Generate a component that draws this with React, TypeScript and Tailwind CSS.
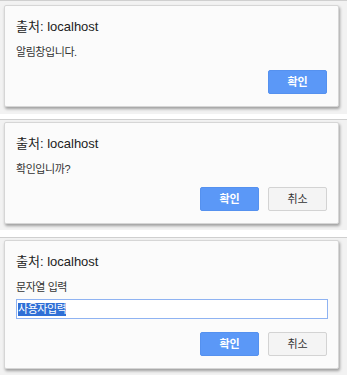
const font = { fontFamily: '"Liberation Sans", "Noto Sans CJK KR", sans-serif' };

function Dialog({ message, prompt, cancel }: { message: string; prompt?: string; cancel?: boolean }) {
  return (
    <div className="bg-[#fbfbfb] border border-[#d6d6d6] rounded-[2px] shadow-[1px_2px_3px_rgba(0,0,0,0.35)] pl-[11px] pr-[11px] pt-[13px] pb-[12px]">
      <div className="text-[13px] leading-[16px] text-[#222]">출처: localhost</div>
      <div className="mt-[10px] text-[11px] leading-[14px] text-[#333] tracking-[-0.04em]">{message}</div>
      {prompt !== undefined && (
        <div className="mt-[5px] h-[20px] mr-[-1px] border border-[#8fb3f2] bg-white flex items-center pl-[1px]">
          <span className="bg-[#2f6fd6] text-white text-[11px] leading-[13px] tracking-[-0.04em]">{prompt}</span>
        </div>
      )}
      <div className={`flex justify-end gap-[9px] ${prompt !== undefined ? 'mt-[13px]' : 'mt-[11px]'}`}>
        <button className="w-[59px] h-[24px] rounded-[2px] bg-[#5b98f7] border border-[#5591ef] text-white text-[11px] font-bold">
          확인
        </button>
        {cancel && (
          <button className="w-[59px] h-[24px] rounded-[2px] bg-[#f4f4f4] border border-[#d3d3d3] text-[#333] text-[11px]">
            취소
          </button>
        )}
      </div>
    </div>
  );
}

function Frame({ children, className }: { children: React.ReactNode; className: string }) {
  return (
    <div className={`bg-[#f2f2f2] border-t border-[#cfcfcf] pl-[4px] pr-[8px] ${className}`}>
      {children}
    </div>
  );
}

export default function App() {
  return (
    <div className="w-[347px] h-[375px] bg-white flex flex-col" style={font}>
      <Frame className="pt-[4px] pb-[7px]">
        <Dialog message="알림창입니다." />
      </Frame>
      <Frame className="pt-[2px] pb-[6px] mt-[5px]">
        <Dialog message="확인입니까?" cancel />
      </Frame>
      <Frame className="pt-[2px] pb-[6px] mt-[7px]">
        <Dialog message="문자열 입력" prompt="사용자입력" cancel />
      </Frame>
    </div>
  );
}
